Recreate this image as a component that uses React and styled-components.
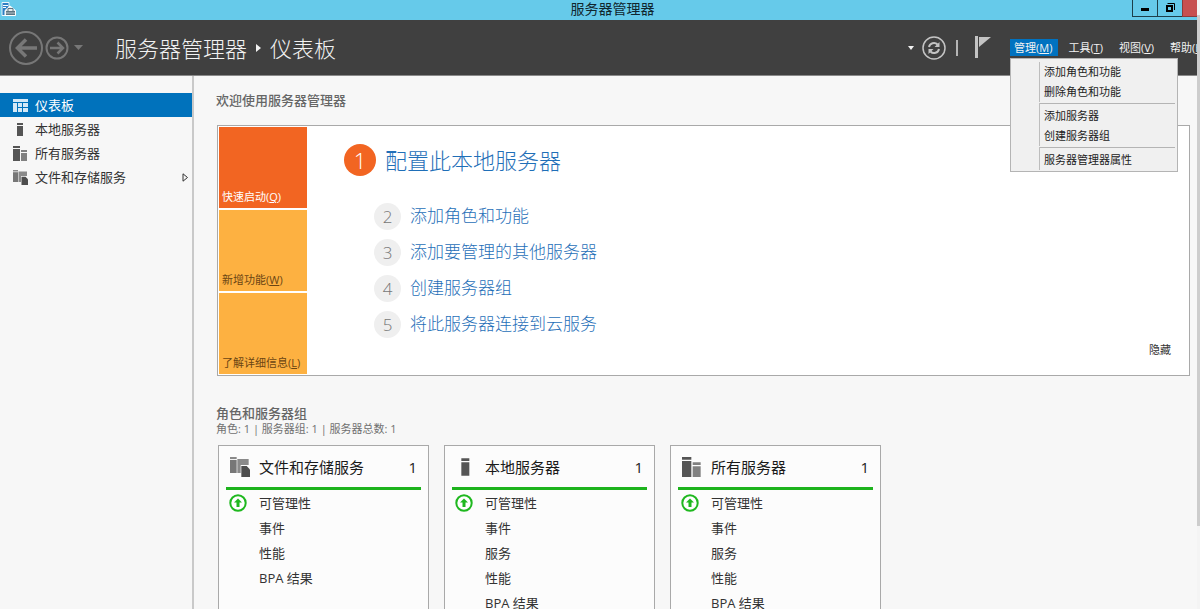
import React from 'react';
import styled, { createGlobalStyle } from 'styled-components';

const GlobalStyle = createGlobalStyle`
  * {
    box-sizing: border-box;
  }
  body {
    margin: 0;
    background-color: #f7f7f7;
    font-family: 'Open Sans', 'Noto Sans CJK SC', sans-serif;
    font-size: 13px;
    color: #333;
  }
  button {
    margin: 0;
    padding: 0;
    border: none;
    background: none;
    font: inherit;
    color: inherit;
    text-align: left;
    white-space: nowrap;
    cursor: pointer;
  }
  a {
    color: inherit;
    text-decoration: none;
  }
  ul {
    margin: 0;
    padding: 0;
    list-style: none;
  }
  h1, h2, h3 {
    margin: 0;
    font-weight: 400;
  }
  svg {
    display: block;
    flex: none;
  }
`;

const Window = styled.div`
  display: flex;
  height: 100vh;
  overflow: hidden;
`;

const Frame = styled.div`
  flex: 1;
  min-width: 0;
  display: flex;
  flex-direction: column;
  overflow: hidden;
`;

const ScrollTrack = styled.div`
  flex: none;
  width: 3px;
  padding-top: 15px;
  background-color: #f4f4f4;
`;

const ScrollThumb = styled.div`
  height: 86%;
  background-color: #cdcdcd;
`;

const TitleBar = styled.div`
  flex: none;
  height: 20px;
  display: grid;
  grid-template-columns: 1fr auto 1fr;
  background-color: #66caea;
  color: #10262e;
  .name {
    font-size: 14px;
    line-height: 18px;
    margin-left: 28px;
  }
`;

const AppIcon = styled.div`
  padding: 2px 0 0 1px;
`;

const WindowButtons = styled.div`
  display: flex;
  justify-content: flex-end;
  height: 17px;
`;

const WindowButton = styled.button`
  width: ${({ $close }) => ($close ? '15px' : '25px')};
  display: flex;
  justify-content: center;
  border: solid #1d3f4a;
  border-width: 0 0 1px 1px;
  ${({ $close }) => $close && `
    background-color: #c75050;
    border-color: #8c3a3a;
  `}
`;

const Header = styled.header`
  flex: none;
  height: 56px;
  display: flex;
  align-items: center;
  padding-left: 8px;
  background-color: #404040;
  border-bottom: 1px solid #8a8a8a;
  color: #f2f2f2;
`;

const NavButtons = styled.div`
  display: flex;
  align-items: center;
  gap: 1px;
`;

const Crumbs = styled.h1`
  flex: 1;
  display: flex;
  align-items: center;
  gap: 9px;
  margin-left: 31px;
  font-size: 22px;
  line-height: 28px;
  font-weight: 300;
  white-space: nowrap;
`;

const HeaderTools = styled.div`
  display: flex;
  align-items: center;
  gap: 8px;
  margin-right: 19px;
`;

const Divider = styled.div`
  width: 2px;
  height: 16px;
  margin: 0 9px 0 2px;
  background-color: #b5b5b5;
`;

const MenuBar = styled.nav`
  display: flex;
  width: 187px;
  gap: 6px;
  font-size: 11px;
  line-height: 17px;
`;

const MenuAnchor = styled.div`
  position: relative;
`;

const MenuButton = styled.button`
  padding: 0 6px 0 4px;
  background-color: ${({ $open }) => ($open ? '#0072c0' : 'transparent')};
`;

const Dropdown = styled.ul`
  position: absolute;
  top: 100%;
  left: 0;
  z-index: 1;
  width: 168px;
  margin-top: 2px;
  padding: 3px 2px 1px 28px;
  background-color: #f0f0f0;
  border: 1px solid #b4b4b4;
  color: #222;
`;

const DropdownItem = styled.li`
  padding-left: 4px;
  border-left: 1px solid #bdbdbd;
  line-height: 20px;
  ${({ $divided }) => $divided && `
    margin-top: 1px;
    padding-top: 3px;
    background: linear-gradient(#b4b4b4, #b4b4b4) top / 100% 1px no-repeat;
  `}
`;

const Body = styled.div`
  flex: 1;
  min-height: 0;
  display: flex;
`;

const Sidebar = styled.nav`
  flex: none;
  width: 194px;
  padding-top: 17px;
  border-right: 2px solid #c9c9c9;
`;

const SidebarItem = styled.a`
  display: flex;
  align-items: center;
  height: 24px;
  padding: 0 3px 0 13px;
  line-height: 24px;
  background-color: ${({ $active }) => ($active ? '#0072bc' : 'transparent')};
  color: ${({ $active }) => ($active ? '#fff' : '#333')};
  .label {
    flex: 1;
    margin-left: 7px;
  }
`;

const Content = styled.main`
  flex: 1;
  min-width: 0;
  padding: 15px 7px 0 22px;
`;

const SectionTitle = styled.h2`
  font-size: 13px;
  line-height: 18px;
  font-weight: 500;
  color: #666;
`;

const Welcome = styled.section`
  display: flex;
  margin: 16px 0 28px 1px;
  padding: 1px;
  background-color: #fff;
  border: 1px solid #a9a9a9;
`;

const Tiles = styled.div`
  display: flex;
  flex-direction: column;
  gap: 2px;
  width: 88px;
`;

const Tile = styled.button`
  display: flex;
  align-items: flex-end;
  height: 81px;
  padding: 0 3px 3px;
  font-size: 11px;
  line-height: 16px;
  background-color: ${({ $active }) => ($active ? '#f26522' : '#fdb141')};
  color: ${({ $active }) => ($active ? '#fff' : '#6b4513')};
`;

const Steps = styled.div`
  flex: 1;
  padding: 16px 0 0 37px;
`;

const Step = styled.a`
  display: flex;
  align-items: center;
  width: max-content;
  height: 36px;
  margin-left: 30px;
  gap: 9px;
  font-size: 17px;
  line-height: 24px;
  font-weight: 300;
  color: #1f6fb8;
  .number {
    width: 27px;
    line-height: 27px;
    border-radius: 50%;
    text-align: center;
    background-color: #efefef;
    color: #777;
  }
`;

const FirstStep = styled(Step)`
  height: 34px;
  margin: 0 0 21px;
  font-size: 22px;
  .number {
    width: 32px;
    line-height: 32px;
    background-color: #f26522;
    color: #fff;
  }
`;

const HideButton = styled.button`
  align-self: flex-end;
  margin: 0 17px 16px 0;
  font-size: 11px;
  line-height: 16px;
`;

const Summary = styled.div`
  font-size: 11px;
  line-height: 14px;
  color: #707070;
`;

const Cards = styled.div`
  display: flex;
  gap: 15px;
  margin: 9px 0 0 2px;
`;

const Card = styled.article`
  width: 211px;
  height: 190px;
  padding: 7px;
  background-color: #fcfcfc;
  border: 1px solid #a9a9a9;
`;

const CardHeader = styled.header`
  display: flex;
  align-items: center;
  height: 37px;
  padding: 0 4px 6px;
  border-bottom: 3px solid #1db31d;
  font-size: 15px;
  line-height: 20px;
  color: #1a1a1a;
  h3 {
    flex: 1;
    margin-left: 9px;
    font-size: 15px;
  }
`;

const CardRow = styled.li`
  display: flex;
  align-items: center;
  height: 25px;
  padding-left: 3px;
  gap: 12px;
  line-height: 18px;
`;

const StatusSlot = styled.div`
  width: 18px;
`;

const ServerManagerIcon = () => (
  <svg width="15" height="14" viewBox="0 0 15 14">
    <path d="M1 .5h7v13H1z" fill="#2d7fc4" stroke="#eaf6fb" />
    <path d="M2 3.500h5M2 5.500h3" stroke="#fff" />
    <path d="M4 8.500l5-4.500 5.500 4.500v5H4z" fill="#e6ecef" stroke="#fff" />
    <path d="M5 9h9v4H5z" fill="#5d7582" />
    <path d="M7 9V6.500h5V9" fill="none" stroke="#5d7582" />
    <path d="M5 11h9" stroke="#b9c6cd" />
  </svg>
);

const BackIcon = () => (
  <svg width="36" height="36" viewBox="0 0 36 36" fill="none" stroke="#777">
    <circle cx="18" cy="18" r="16" strokeWidth="2" />
    <path d="M29 18H10M18 9.500L9.500 18l8.500 8.500" strokeWidth="3.500" />
  </svg>
);

const ForwardIcon = () => (
  <svg width="24" height="24" viewBox="0 0 24 24" fill="none" stroke="#777">
    <circle cx="12" cy="12" r="10.500" strokeWidth="2" />
    <path d="M5 12h13M12.500 6.500l5.500 5.500-5.500 5.500" strokeWidth="2.500" />
  </svg>
);

const RefreshIcon = () => (
  <svg width="24" height="24" viewBox="0 0 24 24" fill="none" stroke="#c4c4c4">
    <circle cx="12" cy="12" r="11" strokeWidth="1.500" />
    <path d="M7 11a5 5 0 0 1 8.500-2.500M17 13a5 5 0 0 1-8.500 2.500" strokeWidth="2" />
    <path d="M17.500 6v5h-5zM6.500 18v-5h5z" fill="#c4c4c4" stroke="none" />
  </svg>
);

const FlagIcon = () => (
  <svg width="16" height="24" viewBox="0 0 16 24">
    <path d="M0 0h3v22H0z" fill="#c4c4c4" />
    <path d="M4 1h12L4 11z" fill="#c4c4c4" />
  </svg>
);

const DashboardIcon = () => (
  <svg width="15" height="13" viewBox="0 0 15 13" fill="#d5e9f7">
    <path d="M0 0h15v3H0zM0 4h4v9H0zM5 4h4v4H5zM10 4h5v4h-5zM5 9h4v4H5zM10 9h5v4h-5z" />
  </svg>
);

const ServerIcon = ({ size = 15 }) => (
  <svg width={size} height={size} viewBox="0 0 15 15">
    <path d="M4 1h6v2H4zM4 4h6v10H4z" fill="#555" />
  </svg>
);

const ServersIcon = ({ size = 15 }) => (
  <svg width={size} height={size} viewBox="0 0 15 15">
    <path d="M0 0h7v2H0zM0 3h7v12H0z" fill="#555" />
    <path d="M8 4h6v2H8zM8 7h6v8H8z" fill="#808080" />
  </svg>
);

const StorageIcon = ({ size = 15 }) => (
  <svg width={size} height={size} viewBox="0 0 15 15">
    <path d="M0 0h5v1.500H0z" fill="#8a8a8a" />
    <path d="M0 2.200h5V12H0z" fill="#777" />
    <path d="M5.500 1.500H14V6H8v6H5.500z" fill="#8a8a8a" />
    <path d="M8.500 6.800h4L15 9.300V15H8.500z" fill="#4d4d4d" />
  </svg>
);

const OnlineIcon = () => (
  <svg width="18" height="18" viewBox="0 0 18 18">
    <circle cx="9" cy="9" r="7.700" fill="#fff" stroke="#1fb81f" strokeWidth="2" />
    <path d="M9 4.500l4 4h-2.500V13h-3V8.500H5z" fill="#1fb81f" />
  </svg>
);

const menus = [
  { name: '管理', hotkey: 'M', open: true },
  { name: '工具', hotkey: 'T' },
  { name: '视图', hotkey: 'V' },
  { name: '帮助', hotkey: 'H' },
];

const manageItems = [
  { label: '添加角色和功能' },
  { label: '删除角色和功能' },
  { label: '添加服务器', divided: true },
  { label: '创建服务器组' },
  { label: '服务器管理器属性', divided: true },
];

const pages = [
  { label: '仪表板', Icon: DashboardIcon, active: true },
  { label: '本地服务器', Icon: ServerIcon },
  { label: '所有服务器', Icon: ServersIcon },
  { label: '文件和存储服务', Icon: StorageIcon, expandable: true },
];

const tiles = [
  { name: '快速启动', hotkey: 'Q', active: true },
  { name: '新增功能', hotkey: 'W' },
  { name: '了解详细信息', hotkey: 'L' },
];

const steps = ['添加角色和功能', '添加要管理的其他服务器', '创建服务器组', '将此服务器连接到云服务'];

const groups = [
  { title: '文件和存储服务', Icon: StorageIcon, rows: ['可管理性', '事件', '性能', 'BPA 结果'] },
  { title: '本地服务器', Icon: ServerIcon, rows: ['可管理性', '事件', '服务', '性能', 'BPA 结果'] },
  { title: '所有服务器', Icon: ServersIcon, rows: ['可管理性', '事件', '服务', '性能', 'BPA 结果'] },
];

const Hotkey = ({ name, hotkey }) => (
  <span>{name}(<u>{hotkey}</u>)</span>
);

const GroupCard = ({ title, Icon, rows }) => (
  <Card>
    <CardHeader>
      <Icon size={20} />
      <h3>{title}</h3>
      <span>1</span>
    </CardHeader>
    <ul>
      {rows.map((row, i) => (
        <CardRow key={row}>
          <StatusSlot>{i === 0 && <OnlineIcon />}</StatusSlot>
          <a href="#">{row}</a>
        </CardRow>
      ))}
    </ul>
  </Card>
);

const App = () => (
  <Window>
    <GlobalStyle />
    <Frame>
      <TitleBar>
        <AppIcon><ServerManagerIcon /></AppIcon>
        <div className="name">服务器管理器</div>
        <WindowButtons>
          <WindowButton aria-label="最小化">
            <svg width="10" height="16" viewBox="0 0 10 16"><path d="M1 8h8v3H1z" /></svg>
          </WindowButton>
          <WindowButton aria-label="还原">
            <svg width="10" height="16" viewBox="0 0 10 16" fill="none" stroke="#000">
              <path d="M2.500 3.500h7V10" />
              <path d="M2 6h5v5H2z" strokeWidth="2" />
            </svg>
          </WindowButton>
          <WindowButton $close aria-label="关闭" />
        </WindowButtons>
      </TitleBar>
      <Header>
        <NavButtons>
          <button aria-label="后退"><BackIcon /></button>
          <button aria-label="前进"><ForwardIcon /></button>
          <button aria-label="历史记录">
            <svg width="14" height="6" viewBox="0 0 14 6"><path d="M4 0h9L8.500 5z" fill="#777" /></svg>
          </button>
        </NavButtons>
        <Crumbs>
          <span>服务器管理器</span>
          <svg width="5" height="8" viewBox="0 0 5 8"><path d="M0 0l5 4-5 4z" fill="#f2f2f2" /></svg>
          <span>仪表板</span>
        </Crumbs>
        <HeaderTools>
          <svg width="6" height="4" viewBox="0 0 6 4"><path d="M0 0h6L3 4z" fill="#f2f2f2" /></svg>
          <button aria-label="刷新"><RefreshIcon /></button>
          <Divider />
          <button aria-label="通知"><FlagIcon /></button>
        </HeaderTools>
        <MenuBar>
          {menus.map(({ open, ...menu }) => (
            <MenuAnchor key={menu.name}>
              <MenuButton $open={open}><Hotkey {...menu} /></MenuButton>
              {open && (
                <Dropdown>
                  {manageItems.map(({ label, divided }) => (
                    <DropdownItem key={label} $divided={divided}>
                      <button>{label}</button>
                    </DropdownItem>
                  ))}
                </Dropdown>
              )}
            </MenuAnchor>
          ))}
        </MenuBar>
      </Header>
      <Body>
        <Sidebar>
          {pages.map(({ label, Icon, active, expandable }) => (
            <SidebarItem key={label} href="#" $active={active}>
              <Icon />
              <span className="label">{label}</span>
              {expandable && (
                <svg width="7" height="9" viewBox="0 0 7 9">
                  <path d="M1 .8l4.500 3.700L1 8.200z" fill="none" stroke="#333" />
                </svg>
              )}
            </SidebarItem>
          ))}
        </Sidebar>
        <Content>
          <SectionTitle>欢迎使用服务器管理器</SectionTitle>
          <Welcome>
            <Tiles>
              {tiles.map(({ active, ...tile }) => (
                <Tile key={tile.name} $active={active}><Hotkey {...tile} /></Tile>
              ))}
            </Tiles>
            <Steps>
              <FirstStep href="#"><span className="number">1</span>配置此本地服务器</FirstStep>
              {steps.map((step, i) => (
                <Step key={step} href="#"><span className="number">{i + 2}</span>{step}</Step>
              ))}
            </Steps>
            <HideButton>隐藏</HideButton>
          </Welcome>
          <SectionTitle>角色和服务器组</SectionTitle>
          <Summary>角色: 1 | 服务器组: 1 | 服务器总数: 1</Summary>
          <Cards>
            {groups.map((group) => <GroupCard key={group.title} {...group} />)}
          </Cards>
        </Content>
      </Body>
    </Frame>
    <ScrollTrack><ScrollThumb /></ScrollTrack>
  </Window>
);

export default App;
